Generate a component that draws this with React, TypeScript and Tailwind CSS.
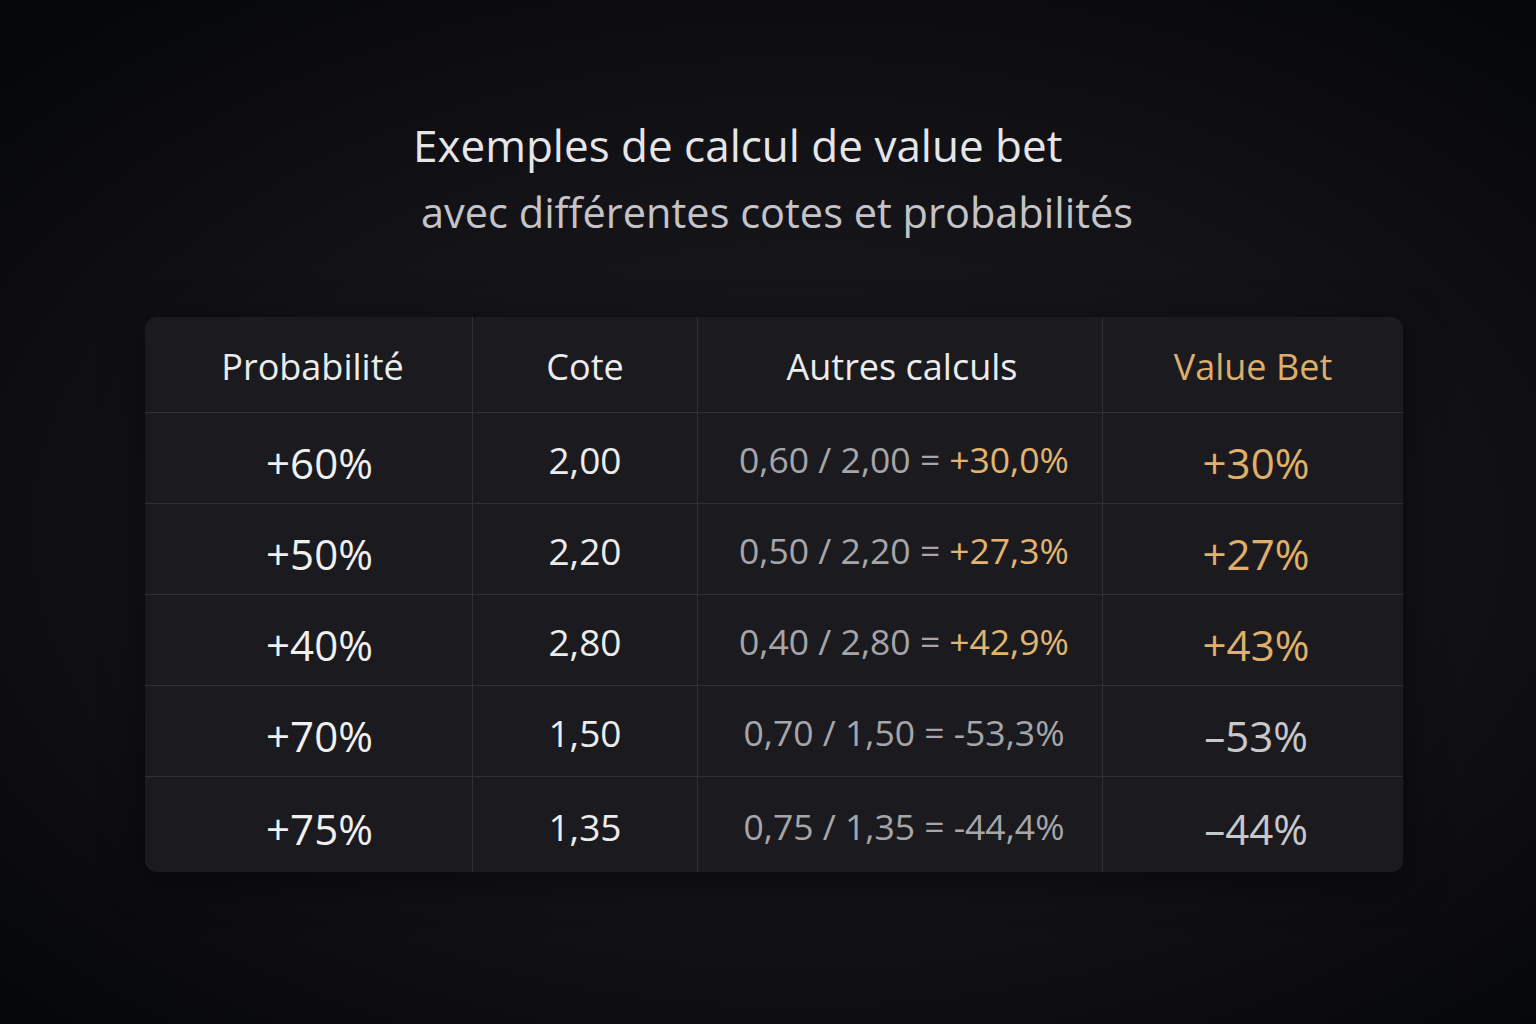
import React from "react";

type Row = {
  prob: string;
  cote: string;
  calc: string;
  result: string;
  value: string;
  positive: boolean;
};

const rows: Row[] = [
  { prob: "+60%", cote: "2,00", calc: "0,60 / 2,00 =", result: "+30,0%", value: "+30%", positive: true },
  { prob: "+50%", cote: "2,20", calc: "0,50 / 2,20 =", result: "+27,3%", value: "+27%", positive: true },
  { prob: "+40%", cote: "2,80", calc: "0,40 / 2,80 =", result: "+42,9%", value: "+43%", positive: true },
  { prob: "+70%", cote: "1,50", calc: "0,70 / 1,50 =", result: "-53,3%", value: "–53%", positive: false },
  { prob: "+75%", cote: "1,35", calc: "0,75 / 1,35 =", result: "-44,4%", value: "–44%", positive: false },
];

const cell = "flex items-center justify-center border-[#303137]";

export default function App() {
  return (
    <div
      className="w-[1536px] h-[1024px] overflow-hidden bg-[radial-gradient(ellipse_70%_65%_at_52%_52%,#1a1a1f_0%,#131317_55%,#060709_100%)] text-[#ececec]"
      style={{ fontFamily: "'Open Sans', 'Noto Sans', sans-serif" }}
    >
      <div className="flex flex-col pt-[119px]">
        <h1 className="pl-[413px] text-[44px] leading-[52px] font-normal text-[#e6e6e8] whitespace-nowrap">
          Exemples de calcul de value bet
        </h1>
        <p className="pl-[421px] mt-[15px] text-[41.5px] leading-[52px] text-[#c4c4c8] whitespace-nowrap">
          avec différentes cotes et probabilités
        </p>

        <div className="ml-[145px] mt-[79px] w-[1258px] rounded-[12px] bg-[#1b1b1f] shadow-[0_10px_40px_rgba(0,0,0,0.5)] overflow-hidden">
          <div className="grid grid-cols-[328px_225px_405px_300px] h-[96px] border-b border-[#303137]">
            <div className={`${cell} border-r pt-[4px] pl-[8px] text-[36px] text-[#ececec]`}>Probabilité</div>
            <div className={`${cell} border-r pt-[4px] text-[36px] text-[#ececec]`}>Cote</div>
            <div className={`${cell} border-r pt-[4px] pl-[4px] text-[36px] text-[#ececec]`}>Autres calculs</div>
            <div className={`${cell} pt-[4px] text-[36px] text-[#dcae6c]`}>Value Bet</div>
          </div>
          {rows.map((r, i) => (
            <div
              key={r.prob}
              className={`grid grid-cols-[328px_225px_405px_300px] ${i === rows.length - 1 ? "h-[95px]" : "h-[91px] border-b border-[#303137]"}`}
            >
              <div className={`${cell} border-r pt-[8px] pl-[22px] text-[42px] text-[#f0f0f0]`}>{r.prob}</div>
              <div className={`${cell} border-r pt-[4px] text-[37px] text-[#ececec]`}>{r.cote}</div>
              <div className={`${cell} border-r pt-[4px] pl-[8px] gap-[9px] text-[35.5px] text-[#a6a6aa] whitespace-nowrap`}>
                <span>{r.calc}</span>
                <span className={r.positive ? "text-[#e2b46f]" : "text-[#a6a6aa]"}>{r.result}</span>
              </div>
              <div className={`${cell} pt-[8px] pl-[6px] text-[42px] ${r.positive ? "text-[#e0b06a]" : "text-[#c8c8cc]"}`}>{r.value}</div>
            </div>
          ))}
        </div>
      </div>
    </div>
  );
}
